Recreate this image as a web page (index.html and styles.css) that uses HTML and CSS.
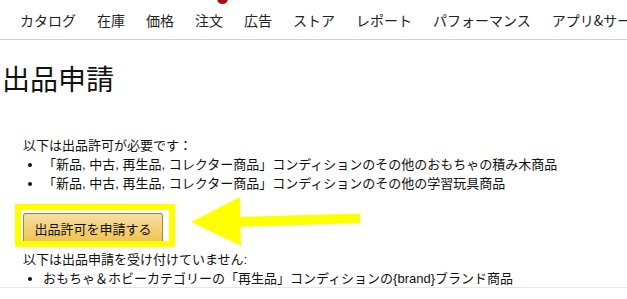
FILE: index.html
```html
<!DOCTYPE html>
<html lang="ja">
<head>
<meta charset="utf-8">
<link rel="stylesheet" href="styles.css">
</head>
<body>
<div class="page">
  <span class="dot"></span>
  <nav class="topnav">
    <span class="nav-item">カタログ</span>
    <span class="nav-item">在庫</span>
    <span class="nav-item">価格</span>
    <span class="nav-item">注文</span>
    <span class="nav-item">広告</span>
    <span class="nav-item">ストア</span>
    <span class="nav-item">レポート</span>
    <span class="nav-item">パフォーマンス</span>
    <span class="nav-item">アプリ&amp;サービス</span>
  </nav>
  <h1 class="title">出品申請</h1>
  <section class="content">
    <p class="lead">以下は出品許可が必要です：</p>
    <ul class="list">
      <li>「新品, 中古, 再生品, コレクター商品」コンディションのその他のおもちゃの積み木商品</li>
      <li>「新品, 中古, 再生品, コレクター商品」コンディションのその他の学習玩具商品</li>
    </ul>
    <div class="btn-row">
      <button class="btn">出品許可を申請する</button>
    </div>
    <p class="lead">以下は出品申請を受け付けていません:</p>
    <ul class="list">
      <li>おもちゃ＆ホビーカテゴリーの「再生品」コンディションの{brand}ブランド商品</li>
    </ul>
  </section>
  <svg class="annot" width="627" height="299" viewBox="0 0 627 299">
    <rect x="18" y="207" width="154" height="37" fill="none" stroke="#ffff00" stroke-width="6"/>
    <polygon points="191,222 240,197 241,246" fill="#ffff00"/>
    <polygon points="236,217 360,213.5 360,223 236,227" fill="#ffff00"/>
  </svg>
</div>
</body>
</html>
```

FILE: styles.css
```css
html, body {
  margin: 0;
  padding: 0;
  background: #fff;
}
body {
  font-family: "Liberation Sans", "Noto Sans CJK JP", sans-serif;
  color: #111;
}
.page {
  position: relative;
  width: 627px;
  height: 299px;
  overflow: hidden;
}
.dot {
  position: absolute;
  left: 217px;
  top: -7px;
  width: 11px;
  height: 11px;
  border-radius: 50%;
  background: #a80d0d;
}
.topnav {
  display: flex;
  align-items: center;
  gap: 21px;
  height: 39px;
  padding-left: 20px;
  border-bottom: 1px solid #d5d5d5;
  white-space: nowrap;
  font-family: "Noto Sans CJK JP", sans-serif;
  font-size: 14px;
  color: #232323;
}
.nav-item {
  flex: none;
  line-height: 20px;
}
.title {
  margin: 22px 0 0 2px;
  font-family: "Noto Sans CJK JP", sans-serif;
  font-size: 28px;
  font-weight: normal;
  line-height: 32px;
  color: #111;
}
.content {
  padding-left: 23px;
  padding-top: 42px;
  padding-bottom: 0;
  height: 194px;
  box-sizing: border-box;
  border-bottom: 1px solid #e7e7e7;
  font-size: 13px;
  line-height: 19px;
}
.lead {
  margin: 0;
}
.list {
  margin: 0;
  padding-left: 20px;
}
.btn-row {
  display: flex;
  margin-top: 20px;
  margin-bottom: 6px;
}
.btn {
  width: 140px;
  height: 31px;
  padding: 0;
  border: 1px solid #a88734;
  border-top-color: #9c7e31;
  border-bottom-color: #846a29;
  border-radius: 3px;
  background: linear-gradient(to bottom, #f7dfa5, #f0c14b);
  font-family: "Liberation Sans", "Noto Sans CJK JP", sans-serif;
  font-size: 13px;
  color: #111;
}
.annot {
  position: absolute;
  left: 0;
  top: 0;
  pointer-events: none;
}
```
